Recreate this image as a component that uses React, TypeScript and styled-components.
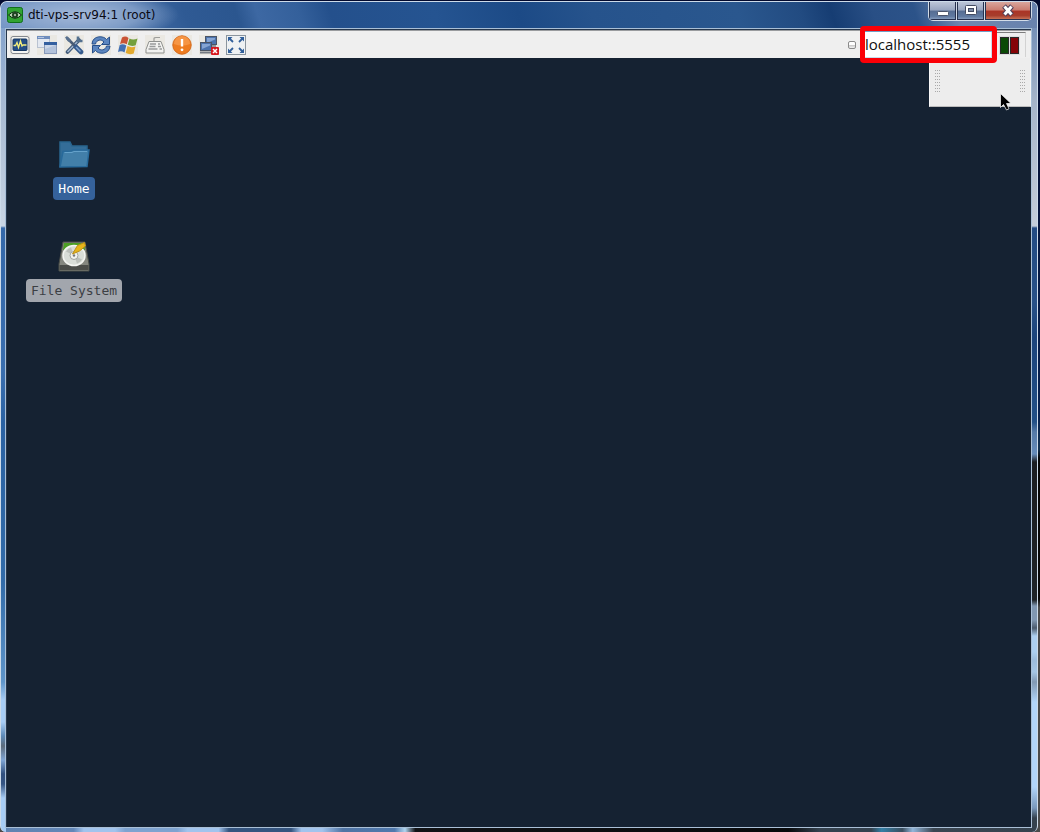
import React from "react";
import styled, { createGlobalStyle } from "styled-components";

const Global = createGlobalStyle`
  *, *::before, *::after { box-sizing: border-box; }
  html, body { margin: 0; }
  body { background: #02061c; }
  button { font: inherit; padding: 0; margin: 0; border: 0; background: none; }
`;

const Desktop = styled.div`
  min-height: 100vh;
  display: flex;
  flex-direction: column;
  padding: 1px 2px 0 0;
  background: linear-gradient(#030a2e, #061f4d 50%, #12304f 54%, #050505 55%, #070707 72%, #4a4a4a 73%, #4a4a4a);
`;

const Frame = styled.div`
  position: relative;
  flex: 1;
  display: flex;
  flex-direction: column;
  border: 1px solid #cddbe9;
  border-bottom: 0;
  border-radius: 7px 7px 6px 6px;
  padding: 0 5px 4px 4px;
  background:
    linear-gradient(#7398c8 0, #86a4cd 30px, #a6b9d2 100px, #c9d5e4 224px, #3468a9 226px, #3a6eae 370px, #2b62a2 420px, #326ba8 580px, #5f95c9 680px, #a8cdf5 698px, #a8cdf5 720px, #5d8ab8 734px, #5c6b7b 744px, #7fa5d4 758px, #304f7d 772px, #355583 782px, #a8cdf5 796px, #a8cdf5) left / 5px 100% no-repeat,
    linear-gradient(#5d7db0 0, #7892b8 30px, #a6b5ca 100px, #c3cdda 224px, #224b84 226px, #285188 300px, #1b447c 335px, #225087 420px, #557aa8 430px, #668cba 452px, #1b1d20 460px, #1f2428 598px, #8198b2 604px, #8198b2 618px, #4b5b6d 626px, #accff0 634px, #accff0 650px, #9cbcdc 658px, #a5c6e5 670px, #8199b4 680px, #b1d5fa 700px, #b1d5fa 785px, #7998bb 806px, #35424e 816px) right / 5px 100% no-repeat,
    linear-gradient(90deg, #6083b0 0, #6287b8 7%, #a1c4ed 8%, #a1c4ed 11%, #7ea3d0 12%, #7ea3d0 17%, #a1c4ed 18%, #a1c4ed 21%, #35557f 22%, #35557f 28%, #a1c4ed 29%, #a1c4ed 31%, #4f74a4 33%, #5079ad 38%, #b0d5ef 39%, #111316 40%, #07090b 76%, #34424f 79%, #34424f 84%, #347fa6 85%, #3a4e5f 87%, #92b6da 88%, #3a4652 90%, #35424e) bottom / 100% 5px no-repeat,
    #6083b0;
`;

const TitleBar = styled.header`
  display: flex;
  align-items: flex-start;
  height: 26px;
  margin: 0 -5px 0 -4px;
  padding-left: 6px;
  border-radius: 6px 6px 0 0;
  background:
    radial-gradient(ellipse 100px 26px at 78px 13px, #a3b8d8 0, #91abd0bb 60%, #7896c500 100%),
    linear-gradient(72deg, #6f92c4 0, #4f78b0 10%, #2f5a94 18%, #2b568f 23%, #3d68a3 25%, #34609b 29%, #24508c 32%, #255491 42%, #1c4a86 50%, #26538c 57%, #2a578e 71%, #224b81 77%, #163d73 80%, #294f85 84%, #2c5389 88%, #6f87b0 92%, #6882ad 100%);
`;

const AppIcon = styled.svg`
  width: 16px;
  height: 16px;
  margin-top: 5px;
  flex: none;
`;

const Title = styled.h1`
  flex: 1;
  margin: 0 0 0 5px;
  font: 400 12px/26px "DejaVu Sans", sans-serif;
  color: #0a0a14;
  white-space: nowrap;
`;

const WindowButtons = styled.div`
  display: flex;
  height: 19px;
  margin-right: 5px;
  border: 1px solid #d3dce8;
  border-top: 0;
  border-radius: 0 0 5px 5px;
  overflow: hidden;
`;

const WindowButton = styled.button<{ $close?: boolean }>`
  width: ${(p) => (p.$close ? 46 : 28)}px;
  display: grid;
  place-items: center;
  border-right: ${(p) => (p.$close ? "0" : "1px solid #d3dce8")};
  box-shadow: inset 1px 0 #26324e, inset -1px -1px #27314f;
  background: ${(p) =>
    p.$close
      ? "linear-gradient(#d9a69c 0, #c97c70 45%, #ab3426 50%, #a73d2c 75%, #cf7f62)"
      : "linear-gradient(#bcc5d7 0, #98a5bf 45%, #566d93 50%, #6079a0 80%, #93a9c8)"};
`;

const Client = styled.main`
  flex: 1;
  display: flex;
  flex-direction: column;
  border: 1px solid #a9bfd6;
  box-shadow: inset 1px 1px #26374d;
  padding: 1px 0 0 1px;
  background: #152232;
`;

const Toolbar = styled.div`
  display: flex;
  align-items: center;
  height: 28px;
  padding: 0 5px 0 3px;
  border-top: 1px solid #9a9c9f;
  background: #efefef;
`;

const Tools = styled.div`
  display: flex;
  gap: 7px;
  flex: 1;
`;

const Tool = styled.button`
  width: 20px;
  height: 20px;
  background: #eae8e2;
  svg { display: block; width: 20px; height: 20px; }
`;

const Connection = styled.form`
  display: flex;
  align-items: center;
  margin: 0;
`;

const Grip = styled.span`
  width: 8px;
  height: 8px;
  margin-right: 4px;
  border: 1px solid #8b8b8b;
  border-radius: 2px;
  background: linear-gradient(#fff 45%, #c5c5c5 50%, #f3f3f3);
`;

const Address = styled.input`
  position: relative;
  z-index: 1;
  width: 137px;
  height: 37px;
  margin: -6px 0;
  padding: 0 0 2px 0;
  border: 5px solid #fb0007;
  border-radius: 4px;
  outline: 0;
  background: #fff;
  box-shadow: inset 0 1px #6f9fc8, inset -1px -1px #c8dded;
  font: 400 15px "Open Sans", "Liberation Sans", sans-serif;
  color: #111;
`;

const StatusWell = styled.div`
  align-self: flex-end;
  width: 29px;
  height: 25px;
  padding: 3px 0 0 2px;
  border-top: 1px solid #7d7d7d;
  border-right: 1px solid #d2d2d2;
`;

const Lights = styled.span`
  display: flex;
  gap: 1px;
  width: 21px;
  padding: 1px;
  background: #dedede;
`;

const Light = styled.i<{ $color: string }>`
  width: 9px;
  height: 17px;
  border: 1px solid #282828;
  background: ${(p) => p.$color};
`;

const Screen = styled.section`
  position: relative;
  flex: 1;
  padding: 79px 18px 0;
`;

const TrayPanel = styled.aside`
  position: absolute;
  top: 0;
  right: 0;
  width: 102px;
  height: 49px;
  display: flex;
  justify-content: space-between;
  padding: 12px 5px;
  border: 1px solid #f8f8f8;
  border-top: 0;
  border-bottom-color: #bcbcbc;
  background: #ededed;
`;

const Dots = styled.span`
  width: 5px;
  height: 24px;
  background: conic-gradient(at 1px 1px, #fff0 75%, #a9a9a9 0) 0 0 / 2px 3px;
`;

const Pointer = styled.svg`
  position: absolute;
  top: 35px;
  right: 18px;
  width: 12px;
  height: 18px;
`;

const Shortcuts = styled.div`
  display: flex;
  flex-direction: column;
  align-items: center;
  gap: 39px;
  width: 98px;
`;

const Shortcut = styled.button`
  display: flex;
  flex-direction: column;
  align-items: center;
  gap: 6px;
  svg { width: 34px; height: 34px; }
`;

const Label = styled.span<{ $active?: boolean }>`
  padding: 0 5px;
  height: 23px;
  border-radius: 4px;
  background: ${(p) => (p.$active ? "#35629b" : "#a2a6ad")};
  color: ${(p) => (p.$active ? "#fff" : "#3c3f44")};
  font: 400 13px/23px "DejaVu Sans Mono", monospace;
  white-space: nowrap;
`;

const tools: { name: string; art: React.ReactNode }[] = [
  {
    name: "New connection",
    art: (
      <>
        <rect x="1" y="1.500" width="18" height="17" rx="2" fill="#f5f5f2" stroke="#85898f" />
        <rect x="3" y="4" width="14" height="11.500" rx="1" fill="#244d86" stroke="#17365f" />
        <path d="M3.500 10.500h2l1.500-3 1.500 5 2-6.500 1.500 5 1-1h3.500" fill="none" stroke="#f4ee7c" strokeWidth="1.300" />
      </>
    ),
  },
  {
    name: "Save connection",
    art: (
      <>
        <rect x="0.500" y="1.500" width="12" height="11" fill="#e3e8f1" stroke="#b9c2d1" />
        <path d="M0 1h13v3H0z" fill="#6f8dbd" />
        <path d="M1 2h6v1H1z" fill="#b5c6e2" />
        <rect x="7.500" y="7.500" width="12" height="11" fill="#cbd6e8" stroke="#8798b8" />
        <path d="M8 14 19 10v8H8z" fill="#b3c2db" />
        <path d="M7 7h13v3H7z" fill="#345f9f" />
      </>
    ),
  },
  {
    name: "Options",
    art: (
      <>
        <path d="M3.500 17 15 5" stroke="#3f5878" strokeWidth="3.800" strokeLinecap="round" />
        <path d="M3.500 17 15 5" stroke="#a3b8d2" strokeWidth="1.500" />
        <path d="M3 3 11 11" stroke="#485b76" strokeWidth="2.600" />
        <path d="M12 12 17 17" stroke="#34598c" strokeWidth="4.600" strokeLinecap="round" />
        <path d="M12 12 16.500 16.500" stroke="#83a5d1" strokeWidth="1.500" />
        <path d="M1 2.500 4 6.500 6.500 7 6.500 4.500 3 1z" fill="#58708f" />
        <path d="M14 1.500v4.500h4.500" fill="none" stroke="#53708f" strokeWidth="2.600" />
      </>
    ),
  },
  {
    name: "Refresh",
    art: (
      <g fill="#5b85bf" stroke="#28508a">
        <path d="M1 9C1.500 0 13 .5 15.500 4.500L18.500 2v7.500h-8L13 7C10.500 4 5.500 4.500 4.500 9z" />
        <path d="M19 11C18.500 20 7 19.500 4.500 15.500L1.500 18v-7.500h8L7 13C9.500 16 14.500 15.500 15.500 11z" />
      </g>
    ),
  },
  {
    name: "Send Start key",
    art: (
      <>
        <path d="M4 2.500q3.500-2 6.500.5L8.800 9.300Q5.500 7.500 2 9z" fill="#c95436" />
        <path d="M11.500 3.500q3.500 2 8 0L17.700 10.300q-4 1.500-8-.5z" fill="#74a03c" />
        <path d="M1.700 10Q5 8.500 8.300 10.500L6.500 17.500Q3.500 15.500 0 17z" fill="#4270b5" />
        <path d="M9.500 11q3.500 2 8 .5L15.700 18.500q-4 1.500-8-.5z" fill="#e2a92e" />
      </>
    ),
  },
  {
    name: "Send keys",
    art: (
      <>
        <path d="M9 7V3.500q0-1 2-1h4" fill="none" stroke="#9d9d9a" strokeWidth="1.200" />
        <path d="M4 6.500h12l3 8v3.500H1v-3.500z" fill="#f2f2f0" stroke="#8f918f" />
        <path d="M5 9h6M4.500 11.500h6M3.500 14h9M13 9h2M13 11.500h3M14.500 14h2.500" stroke="#999b9b" strokeWidth="1.300" />
      </>
    ),
  },
  {
    name: "Send Ctrl-Alt-Del",
    art: (
      <>
        <circle cx="10" cy="10" r="9.200" fill="#ee7c20" stroke="#d5691b" />
        <path d="M2 9a8 8 0 0 1 16 0q-8 3-16 0z" fill="#fba65d" opacity=".6" />
        <path d="M10 4v7.500" stroke="#fff" strokeWidth="2.400" />
        <circle cx="10" cy="14.800" r="1.400" fill="#fff" />
      </>
    ),
  },
  {
    name: "Disconnect",
    art: (
      <>
        <rect x="6.500" y="1.500" width="11" height="8" fill="#4c73ad" stroke="#4b5566" />
        <path d="M8 3h8v1.500L8 8z" fill="#86a5d3" />
        <path d="M9 11h8" stroke="#747a83" strokeWidth="1.500" />
        <rect x="1.500" y="7.500" width="11" height="8" fill="#4c73ad" stroke="#4b5566" />
        <path d="M3 9h8v1.500L3 14z" fill="#86a5d3" />
        <path d="M1 17.500h11" stroke="#747a83" strokeWidth="2" />
        <rect x="12" y="12" width="8" height="8" rx="1" fill="#d61920" />
        <path d="m14 14 4 4m0-4-4 4" stroke="#fff" strokeWidth="1.500" />
      </>
    ),
  },
  {
    name: "Full screen",
    art: (
      <>
        <rect x="0.500" y="0.500" width="19" height="19" fill="#eef1f3" stroke="#8b959e" />
        <path d="M2 2h4.500L2 6.500zM18 2h-4.500L18 6.500zM2 18h4.500L2 13.500zM18 18h-4.500l4.500-4.500z" fill="#315f9b" />
        <path d="m3.500 3.500 3.500 3.500m9.500-3.500-3.500 3.500m-9.500 9.500 3.500-3.500m9.500 3.500-3.500-3.500" stroke="#315f9b" strokeWidth="1.800" />
      </>
    ),
  },
];

export default function App() {
  return (
    <>
      <Global />
      <Desktop>
        <Frame>
          <TitleBar>
            <AppIcon viewBox="0 0 16 16" aria-hidden="true">
              <rect x=".5" y=".5" width="15" height="15" rx="2" fill="#32a332" stroke="#0e6f1b" />
              <path d="M1.500 8Q8 1.500 14.500 8 8 14.500 1.500 8z" fill="#b9d5b4" stroke="#0a2b0d" />
              <circle cx="8" cy="8" r="3" fill="#183c1b" />
              <circle cx="8" cy="8" r="1.200" fill="#9eae9b" />
            </AppIcon>
            <Title>dti-vps-srv94:1 (root)</Title>
            <WindowButtons>
              <WindowButton aria-label="Minimize">
                <svg width="14" height="14"><rect x="1.500" y="7.500" width="11" height="4" rx="1" fill="#fff" stroke="#4b546b" /></svg>
              </WindowButton>
              <WindowButton aria-label="Maximize">
                <svg width="14" height="14"><rect x="1.500" y="1.500" width="11" height="9" rx="1" fill="#fff" stroke="#434b61" /><rect x="4.500" y="4.500" width="5" height="3" fill="#7d8ba6" stroke="#434b61" /></svg>
              </WindowButton>
              <WindowButton $close aria-label="Close">
                <svg width="14" height="14"><path d="m3 2 8 9m0-9-8 9" stroke="#50405a" strokeWidth="5" /><path d="m3.500 2.500 7 8m0-8-7 8" stroke="#fff" strokeWidth="3" /></svg>
              </WindowButton>
            </WindowButtons>
          </TitleBar>
          <Client>
            <Toolbar>
              <Tools>
                {tools.map((t) => (
                  <Tool key={t.name} aria-label={t.name}>
                    <svg viewBox="0 0 20 20">{t.art}</svg>
                  </Tool>
                ))}
              </Tools>
              <Connection>
                <Grip />
                <Address aria-label="Server" defaultValue="localhost::5555" />
                <StatusWell>
                  <Lights>
                    <Light $color="#0b4906" />
                    <Light $color="#850407" />
                  </Lights>
                </StatusWell>
              </Connection>
            </Toolbar>
            <Screen>
              <Shortcuts>
                <Shortcut>
                  <svg viewBox="0 0 34 34">
                    <path d="M3 30V5h10l2 4h15v5" fill="#346d98" stroke="#28658f" strokeWidth="1.500" />
                    <path d="M3 30 6 14.500l8-.5 2-1h16l-2 16.500z" fill="#427fa9" stroke="#286a9b" strokeWidth="1.500" />
                    <path d="M7.500 15.500H15l2-1h13" stroke="#64a1ca" fill="none" />
                  </svg>
                  <Label $active>Home</Label>
                </Shortcut>
                <Shortcut>
                  <svg viewBox="0 0 34 34">
                    <path d="m6 3h22l4 22v7H2v-7z" fill="#85877f" stroke="#4b4e48" />
                    <path d="m7 4h20l1 7H6z" fill="#4c9e24" />
                    <path d="M2.500 26h29v5h-29z" fill="#4b4d49" />
                    <ellipse cx="17" cy="16.500" rx="11" ry="10" fill="#d9ddd7" stroke="#f4f5f1" strokeWidth="1.500" />
                    <path d="m17 16.500-8-4a10 9 0 0 1 5-4zM17 16.500l8 4a10 9 0 0 1-5 4z" fill="#bcc0ba" />
                    <circle cx="17" cy="16.500" r="4" fill="#f2f3ef" stroke="#a1a49e" />
                    <circle cx="17" cy="16.500" r="1.200" fill="#777" />
                    <path d="m15.500 15 5-8.500 7-3 1 3.500-6 5z" fill="#e7b51b" stroke="#bd9117" />
                  </svg>
                  <Label>File System</Label>
                </Shortcut>
              </Shortcuts>
              <TrayPanel>
                <Dots />
                <Dots />
                <Pointer viewBox="0 0 12 18">
                  <path d="M.5.500v14l3-3 3 5.500 2.500-1.200L6.500 10.500H11z" fill="#000" stroke="#fff" strokeWidth=".7" />
                </Pointer>
              </TrayPanel>
            </Screen>
          </Client>
        </Frame>
      </Desktop>
    </>
  );
}
